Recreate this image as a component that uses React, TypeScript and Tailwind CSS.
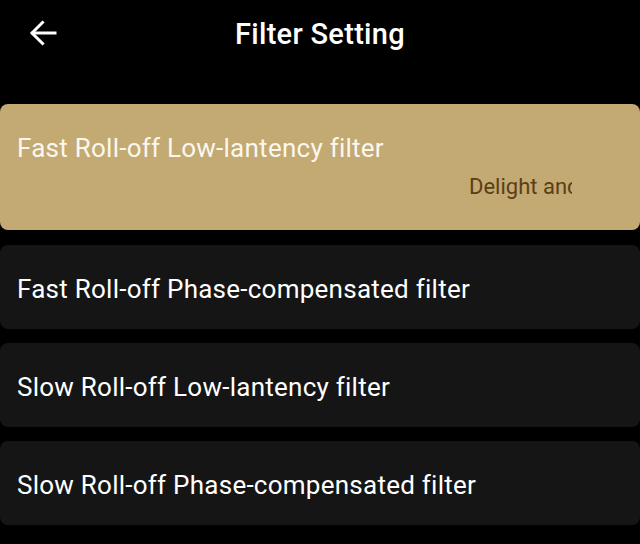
import React, { useState } from 'react';

const filters = [
  'Fast Roll-off Low-lantency filter',
  'Fast Roll-off Phase-compensated filter',
  'Slow Roll-off Low-lantency filter',
  'Slow Roll-off Phase-compensated filter',
];

const BackArrow: React.FC = () => (
  <svg width="28" height="26" viewBox="0 0 28 26" fill="none" stroke="white" strokeWidth="3" strokeLinecap="square">
    <path d="M26 13H4" />
    <path d="M13.5 2.5L3 13l10.5 10.5" />
  </svg>
);

const App: React.FC = () => {
  const [selected, setSelected] = useState(0);

  return (
    <div className="w-[640px] h-[544px] bg-black overflow-hidden" style={{ fontFamily: 'Roboto, "Noto Sans", sans-serif' }}>
      {/* Header */}
      <div className="relative h-[66px] pt-[3px] flex items-center justify-center">
        <button className="absolute left-[29px] top-[20px]">
          <BackArrow />
        </button>
        <h1 className="text-white text-[29px] font-medium leading-none tracking-[0.3px]">Filter Setting</h1>
      </div>

      {/* Filter list */}
      <div className="mt-[38px] flex flex-col gap-[14px]">
        {filters.map((name, i) =>
          i === selected ? (
            <div key={name} onClick={() => setSelected(i)} className="h-[126px] mb-[1px] rounded-[8px] bg-[#c3a972] px-[17px] pt-[28px] cursor-pointer">
              <p className="text-[#fbf7ee] text-[26px] leading-[32px] tracking-[0.25px]">{name}</p>
              <div className="mt-[9px] flex justify-end pr-[51px]">
                <div className="w-[103px] overflow-hidden whitespace-nowrap">
                  <span className="text-[#5b3e17] text-[22px] leading-[28px]">Delight and natural sound</span>
                </div>
              </div>
            </div>
          ) : (
            <div key={name} onClick={() => setSelected(i)} className="h-[84px] rounded-[8px] bg-[#151515] px-[17px] pt-[3px] flex items-center cursor-pointer">
              <p className="text-white text-[26px] leading-[32px] tracking-[0.25px]">{name}</p>
            </div>
          )
        )}
      </div>
    </div>
  );
};

export default App;
